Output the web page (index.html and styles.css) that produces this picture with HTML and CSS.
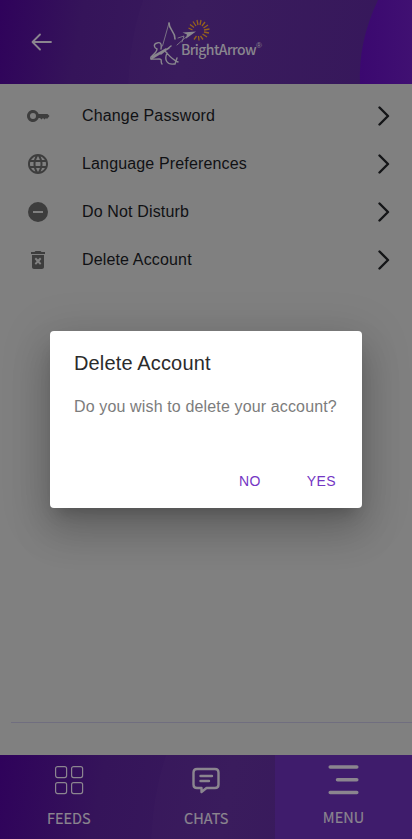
FILE: index.html
```html
<!DOCTYPE html>
<html lang="en">
<head>
<meta charset="utf-8">
<meta name="viewport" content="width=device-width, initial-scale=1">
<title>BrightArrow</title>
<link rel="stylesheet" href="styles.css">
</head>
<body>
<div class="app">
  <header class="header">
    <svg class="header-art" viewBox="0 0 412 84" preserveAspectRatio="none">
      <defs><linearGradient id="blob"><stop offset="0" stop-color="#3b0870"/><stop offset="1" stop-color="#401072"/></linearGradient></defs>
      <path d="M143 0Q130 36 128 84H412V0Z" fill="#fff" fill-opacity=".01"/>
      <path d="M378 0Q358 42 360 84H412V0Z" fill="url(#blob)"/>
    </svg>
    <svg class="back" viewBox="0 0 22 20"><path d="M20 10H2M9 2.500L1.500 10L9 17.500"/></svg>
    <div class="logo">
      <svg class="archer" viewBox="0 0 62 50">
        <g fill="none" stroke="#89868e" stroke-linecap="round" stroke-linejoin="round">
          <path stroke-width=".8" d="M19 5L12.500 28M27 27L36 19M28 20L34 18L32 24"/>
          <path stroke-width="1.600" d="M19 5C19 12 25 13 25 21"/>
          <path stroke-width="1.500" d="M1 41L19 30M2 39L16 31M11 36L21 28"/>
          <path stroke-width="1.400" d="M11 31C12 25 10 24 7 25C3 26 4 30 7 31C7 34 3 37 1 39C0 42 4 41 9 41C13 41 10 44 12 46"/>
          <path stroke-width="1.400" d="M15 33C18 36 21 41 28 44M17 35C14 42 17 47 24 46M25 46L27 40"/>
        </g>
        <path d="M32.500 14.500L46 13.500L35.500 21L37 16.500Z" fill="#89868e"/>
        <g stroke="#96621c" stroke-width="1.300">
          <path d="M38.500 10L42.500 12M40 6.500L44 9.500M43 3.500L46 8M47 2L48 7M51 2L50 7M55 4L52 8M58 7L53.500 10M59.500 11L54 12M59 15L54 14M57 19L52.500 16M53 21.500L50.500 18M49 22.500L48.500 18M44 21.500L46.500 18"/>
        </g>
      </svg>
      <span class="brand">BrightArrow</span><span class="reg">®</span>
    </div>
  </header>

  <main class="content">
    <ul class="settings">
      <li class="row">
        <svg class="icon" viewBox="0 0 24 24"><path d="M12.650 10C11.830 7.670 9.610 6 7 6c-3.310 0-6 2.690-6 6s2.690 6 6 6c2.610 0 4.830-1.670 5.650-4H14l1.500 1.500L17 14l1.500 1.500L20 14l1 1 2.500-3-2-2H12.650zM7 15a3 3 0 1 1 0-6 3 3 0 0 1 0 6z"/></svg>
        <span class="label">Change Password</span>
        <svg class="chevron" viewBox="0 0 12 20"><path d="M1.500 1.500L10 10L1.500 18.500"/></svg>
      </li>
      <li class="row">
        <svg class="icon" viewBox="0 0 24 24"><path d="M11.990 2C6.470 2 2 6.480 2 12s4.470 10 9.990 10C17.520 22 22 17.520 22 12S17.520 2 11.990 2zm6.930 6h-2.950c-.32-1.250-.78-2.450-1.380-3.560 1.840.63 3.370 1.910 4.330 3.560zM12 4.040c.83 1.200 1.480 2.530 1.910 3.960h-3.820c.43-1.430 1.080-2.760 1.910-3.960zM4.260 14C4.100 13.360 4 12.690 4 12s.1-1.360.26-2h3.380c-.08.66-.14 1.320-.14 2s.06 1.340.14 2H4.260zm.82 2h2.950c.32 1.250.78 2.450 1.380 3.560-1.840-.63-3.370-1.900-4.330-3.560zm2.950-8H5.080c.96-1.660 2.490-2.930 4.330-3.560C8.810 5.550 8.350 6.750 8.030 8zM12 19.960c-.83-1.200-1.480-2.530-1.910-3.960h3.820c-.43 1.430-1.080 2.760-1.910 3.960zM14.340 14H9.660c-.09-.66-.16-1.320-.16-2s.07-1.350.16-2h4.680c.09.65.16 1.320.16 2s-.07 1.340-.16 2zm.25 5.560c.6-1.110 1.060-2.310 1.380-3.560h2.950c-.96 1.650-2.490 2.930-4.330 3.560zM16.360 14c.08-.66.14-1.320.14-2s-.06-1.340-.14-2h3.380c.16.640.26 1.310.26 2s-.1 1.360-.26 2h-3.380z"/></svg>
        <span class="label">Language Preferences</span>
        <svg class="chevron" viewBox="0 0 12 20"><path d="M1.500 1.500L10 10L1.500 18.500"/></svg>
      </li>
      <li class="row">
        <svg class="icon" viewBox="0 0 24 24"><path d="M12 2a10 10 0 1 0 0 20 10 10 0 0 0 0-20zm5 11H7v-2h10v2z"/></svg>
        <span class="label">Do Not Disturb</span>
        <svg class="chevron" viewBox="0 0 12 20"><path d="M1.500 1.500L10 10L1.500 18.500"/></svg>
      </li>
      <li class="row">
        <svg class="icon" viewBox="0 0 24 24"><path fill-rule="evenodd" d="M15.500 4L14.500 3h-5l-1 1H5v2h14V4h-3.500zM6 7v12c0 1.100.9 2 2 2h8c1.100 0 2-.9 2-2V7H6zm2.600 4L10 9.600l2 2 2-2L15.400 11l-2 2.200 2 2.200L14 16.800l-2-2-2 2-1.400-1.400 2-2.200L8.600 11z"/></svg>
        <span class="label">Delete Account</span>
        <svg class="chevron" viewBox="0 0 12 20"><path d="M1.500 1.500L10 10L1.500 18.500"/></svg>
      </li>
    </ul>
    <hr class="rule">
  </main>

  <nav class="tabs">
    <svg class="tabs-art" viewBox="0 0 412 84" preserveAspectRatio="none"><path d="M166 0Q153 36 151 84H412V0Z" fill="#fff" fill-opacity=".01"/></svg>
    <a class="tab">
      <svg class="tab-icon" viewBox="0 0 32 32"><g fill="none" stroke="#8b858f" stroke-width="1.200"><rect x="2.600" y="2.600" width="11" height="11" rx="2"/><rect x="18.600" y="2.600" width="11" height="11" rx="2"/><rect x="2.600" y="18.600" width="11" height="11" rx="2"/><rect x="18.600" y="18.600" width="11" height="11" rx="2"/></g></svg>
      <span>FEEDS</span>
    </a>
    <a class="tab">
      <svg class="tab-icon" viewBox="0 0 32 32"><path d="M7 5H25Q28.500 5 28.500 8.500V20.500Q28.500 24 25 24H16.500L11.500 28V24H7Q3.500 24 3.500 20.500V8.500Q3.500 5 7 5ZM10.500 12H22M10.500 17H19" fill="none" stroke="#8b858f" stroke-width="2.400" stroke-linecap="round" stroke-linejoin="round"/></svg>
      <span>CHATS</span>
    </a>
    <a class="tab active">
      <svg class="tab-icon" viewBox="0 0 32 32"><path d="M2.200 3H28.800M9.500 15.800H28.800M2.200 28.600H28.800" fill="none" stroke="#8b858f" stroke-width="3.500" stroke-linecap="round"/></svg>
      <span>MENU</span>
    </a>
  </nav>

  <div class="overlay">
    <section class="dialog" role="dialog">
      <h2>Delete Account</h2>
      <p>Do you wish to delete your account?</p>
      <div class="actions"><button>NO</button><button>YES</button></div>
    </section>
  </div>
</div>
</body>
</html>
```
FILE: styles.css
```css
* { box-sizing: border-box; }
body { margin: 0; background: #808080; font-family: "Liberation Sans", Arial, sans-serif; }
.app { position: relative; display: flex; flex-direction: column; height: 839px; overflow: hidden; }
.header { position: relative; height: 84px; flex: none; display: flex; align-items: center; padding-left: 31px; background: linear-gradient(100deg, #2f025b 0, #35145a 20%, #381a5c 45%, #34155a 100%); }
.header-art, .tabs-art { position: absolute; inset: 0; width: 100%; height: 100%; }
.back { position: relative; width: 22px; height: 20px; fill: none; stroke: #8b858f; stroke-width: 1.8; stroke-linecap: round; stroke-linejoin: round; }
.logo { position: relative; display: flex; width: 115px; height: 50px; margin-left: 97px; color: #89868e; }
.archer { width: 62px; height: 50px; flex: none; margin-top: 1px; }
.brand { margin: 22px 0 0 -31px; width: 76px; flex: none; font: 500 14px/20px "Noto Sans CJK SC", sans-serif; letter-spacing: -.6px; }
.reg { margin: 23px 0 0 -1px; font-size: 8px; line-height: 12px; }
.content { flex: 1; display: flex; flex-direction: column; justify-content: space-between; }
.settings { list-style: none; margin: 0; padding: 8px 22px 0 26px; }
.row { display: flex; align-items: center; height: 48px; }
.icon { width: 24px; height: 24px; fill: #3d3d3d; }
.label { flex: 1; margin-left: 32px; font-size: 16px; letter-spacing: .15px; color: #101114; }
.chevron { width: 12px; height: 20px; fill: none; stroke: #141517; stroke-width: 2.4; stroke-linecap: round; stroke-linejoin: round; }
.rule { width: calc(100% - 11px); height: 1px; margin: 0 0 32px 11px; border: 0; background: #706e7f; }
.tabs { position: relative; height: 84px; flex: none; display: grid; grid-template-columns: 137.5px 137.5px 1fr; background: linear-gradient(100deg, #2f025b 0, #35145a 25%, #381a5c 55%, #34155a 100%); }
.tab { position: relative; display: flex; flex-direction: column; align-items: center; padding-top: 9px; color: #8b858f; font: 400 14.500px/22px "Noto Sans CJK SC", sans-serif; -webkit-text-stroke: .2px #8b858f; }
.tab-icon { width: 32px; height: 32px; margin-bottom: 11px; }
.tab.active { background: #3f1c6c; }
.active .tab-icon { margin-bottom: 10px; }
.overlay { position: absolute; inset: 0; display: flex; align-items: center; justify-content: center; }
.dialog { width: 312px; height: 177px; padding: 20px 24px; background: #fff; border-radius: 4px; box-shadow: 0 11px 15px -7px rgba(0,0,0,.2), 0 24px 38px 3px rgba(0,0,0,.14), 0 9px 46px 8px rgba(0,0,0,.12); }
.dialog h2 { margin: 0; font-size: 20px; line-height: 24px; font-weight: 400; letter-spacing: .15px; color: #2b2b2b; }
.dialog p { margin: 20px 0 0; font-size: 16px; line-height: 24px; letter-spacing: .14px; color: #7c7c7c; white-space: nowrap; }
.actions { display: flex; justify-content: flex-end; gap: 30px; margin: 44px -6px 0 0; }
.actions button { border: 0; padding: 8px; background: none; color: #7436c4; font: 14px/20px "Liberation Sans", sans-serif; letter-spacing: .4px; }
```
